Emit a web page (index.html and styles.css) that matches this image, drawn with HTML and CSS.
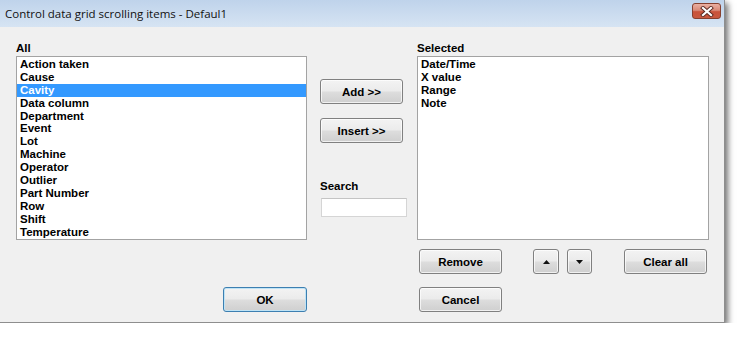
FILE: index.html
```html
<!DOCTYPE html>
<html>
<head>
<meta charset="utf-8">
<link rel="stylesheet" href="styles.css">
</head>
<body>
<div class="window">
  <div class="titlebar">
    <span class="title">Control data grid scrolling items - Defaul1</span>
    <div class="close">
      <svg width="14" height="11" viewBox="0 0 14 11">
        <path d="M3 2 L11 9 M11 2 L3 9" stroke="#5a2a22" stroke-width="4" stroke-linecap="square"/>
        <path d="M3 2 L11 9 M11 2 L3 9" stroke="#ffffff" stroke-width="2.2" stroke-linecap="square"/>
      </svg>
    </div>
  </div>
  <div class="client">
    <div class="col col-left">
      <div class="label">All</div>
      <ul class="listbox">
        <li>Action taken</li>
        <li>Cause</li>
        <li class="sel">Cavity</li>
        <li>Data column</li>
        <li>Department</li>
        <li>Event</li>
        <li>Lot</li>
        <li>Machine</li>
        <li>Operator</li>
        <li>Outlier</li>
        <li>Part Number</li>
        <li>Row</li>
        <li>Shift</li>
        <li>Temperature</li>
      </ul>
      <button class="btn btn-default btn-ok">OK</button>
    </div>
    <div class="col col-mid">
      <button class="btn btn-add">Add &gt;&gt;</button>
      <button class="btn btn-insert">Insert &gt;&gt;</button>
      <div class="label search-label">Search</div>
      <input class="search" type="text">
    </div>
    <div class="col col-right">
      <div class="label">Selected</div>
      <ul class="listbox">
        <li>Date/Time</li>
        <li>X value</li>
        <li>Range</li>
        <li>Note</li>
      </ul>
      <div class="btnrow">
        <button class="btn btn-remove">Remove</button>
        <button class="btn btn-arrow btn-up">
          <svg width="7" height="4" viewBox="0 0 7 4"><path d="M0 4 L3.5 0 L7 4 Z" fill="#111"/></svg>
        </button>
        <button class="btn btn-arrow btn-down">
          <svg width="7" height="4" viewBox="0 0 7 4"><path d="M0 0 L7 0 L3.5 4 Z" fill="#111"/></svg>
        </button>
        <button class="btn btn-clear">Clear all</button>
      </div>
      <button class="btn btn-cancel">Cancel</button>
    </div>
  </div>
</div>
</body>
</html>
```

FILE: styles.css
```css
html, body {
  margin: 0;
  padding: 0;
  background: #ffffff;
}

.window {
  width: 724px;
  height: 322px;
  background: #f0f0f0;
  border-right: 1px solid #8e8e8e;
  border-bottom: 1px solid #8e8e8e;
  box-shadow: 3px 3px 6px rgba(0, 0, 0, 0.55);
  display: flex;
  flex-direction: column;
  font-family: "Liberation Sans", Arial, sans-serif;
  font-weight: bold;
  font-size: 11.5px;
  color: #000;
}

.titlebar {
  height: 27px;
  flex: none;
  background: linear-gradient(#bfd3eb, #d6e4f3);
  display: flex;
  align-items: center;
  justify-content: space-between;
  padding: 0 3px 0 5px;
  box-sizing: border-box;
}

.title {
  font-family: "Open Sans", "Noto Sans", sans-serif;
  font-weight: normal;
  font-size: 11.5px;
  color: #111;
  margin-top: -1px;
}

.close {
  width: 29px;
  height: 16px;
  margin-top: -5px;
  box-sizing: border-box;
  border: 1px solid #86402f;
  border-radius: 3px;
  background: linear-gradient(#eab0a2 0%, #d98a78 45%, #c9533b 55%, #c8583f 100%);
  display: flex;
  align-items: center;
  justify-content: center;
}

.client {
  flex: 1;
  display: flex;
  padding: 14px 0 0 16px;
}

.col {
  display: flex;
  flex-direction: column;
}

.col-left { width: 291px; }
.col-mid { width: 87px; margin-left: 13px; }
.col-right { width: 292px; margin-left: 10px; }

.label {
  height: 14px;
  line-height: 14px;
  margin-bottom: 1px;
}

.listbox {
  list-style: none;
  margin: 0;
  padding: 1px 0 0 0;
  height: 184px;
  box-sizing: border-box;
  border: 1px solid #a3a3a3;
  background: #ffffff;
}

.listbox li {
  line-height: 12.9px;
  height: 12.9px;
  padding-left: 3px;
  white-space: nowrap;
}

.listbox li.sel {
  background: #3399ff;
  color: #ffffff;
}

.btn {
  height: 25px;
  width: 83px;
  padding: 0;
  box-sizing: border-box;
  border: 1px solid #808080;
  border-radius: 3px;
  background: linear-gradient(#f3f3f3 0%, #ebebeb 48%, #dddddd 52%, #cfcfcf 100%);
  box-shadow: inset 0 0 0 1px rgba(255, 255, 255, 0.7);
  font-family: "Liberation Sans", Arial, sans-serif;
  font-weight: bold;
  font-size: 11.5px;
  color: #000;
  display: flex;
  align-items: center;
  justify-content: center;
}

.btn-default {
  border-color: #3c7fb1;
  box-shadow: inset 0 0 0 1px #bfe3f5;
}

.btn-ok {
  width: 84px;
  align-self: flex-end;
  margin-top: 47px;
}

.btn-add { margin-top: 38px; }
.btn-insert { margin-top: 14px; }

.search-label {
  margin-top: 36px;
  margin-bottom: 5px;
}

.search {
  width: 86px;
  height: 19px;
  margin: 0 0 0 1px;
  padding: 0;
  box-sizing: border-box;
  border: 1px solid #d5d5d5;
  border-top-color: #c4c4c4;
  background: #ffffff;
}

.btnrow {
  display: flex;
  margin-top: 9px;
}

.btn-remove { margin-left: 2px; }
.btn-arrow { width: 26px; }
.btn-up { margin-left: 31px; }
.btn-down { margin-left: 8px; width: 25px; }
.btn-clear { margin-left: 32px; }

.btn-cancel {
  margin-top: 13px;
  margin-left: 2px;
}
```
